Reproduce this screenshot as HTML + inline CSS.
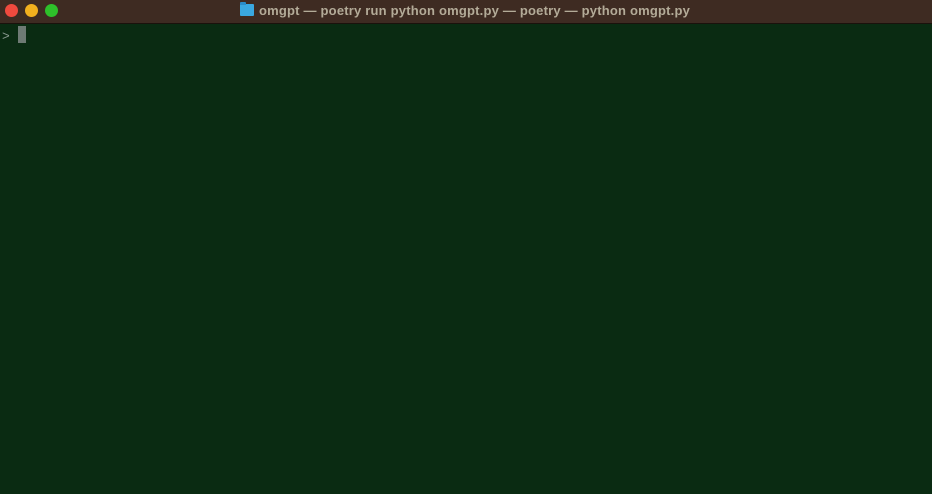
<!DOCTYPE html>
<html><head><meta charset="utf-8"><style>
html,body{margin:0;padding:0;width:932px;height:494px;overflow:hidden;background:#0a2b12;}
.tb{position:absolute;left:0;top:0;width:932px;height:23px;background:#3e2b22;border-bottom:1px solid #1a120c;}
.dot{position:absolute;top:4px;width:13px;height:13px;border-radius:50%;}
.t{position:absolute;left:259px;top:3px;font:bold 13px "Liberation Sans",sans-serif;letter-spacing:0.2px;color:#b3ab98;white-space:nowrap;}
.f{position:absolute;left:240px;top:4px;width:14px;height:12px;background:#3aa8e0;border-radius:1px;}
.f:before{content:"";position:absolute;left:0;top:-2px;width:6px;height:3px;background:#2a8cc8;border-radius:1px 1px 0 0;}
.p{position:absolute;left:2px;top:29px;font:13px "Liberation Mono",monospace;color:#8a9a90;}
.c{position:absolute;left:18px;top:26px;width:8px;height:17px;background:#6e7a74;}
</style></head><body>
<div class="tb">
<div class="dot" style="left:5px;background:#f04a3e"></div>
<div class="dot" style="left:25px;background:#f2b01e"></div>
<div class="dot" style="left:45px;background:#2ec02a"></div>
<div class="f"></div>
<div class="t">omgpt — poetry run python omgpt.py — poetry — python omgpt.py</div>
</div>
<div class="p">&gt;</div>
<div class="c"></div>
</body></html>
